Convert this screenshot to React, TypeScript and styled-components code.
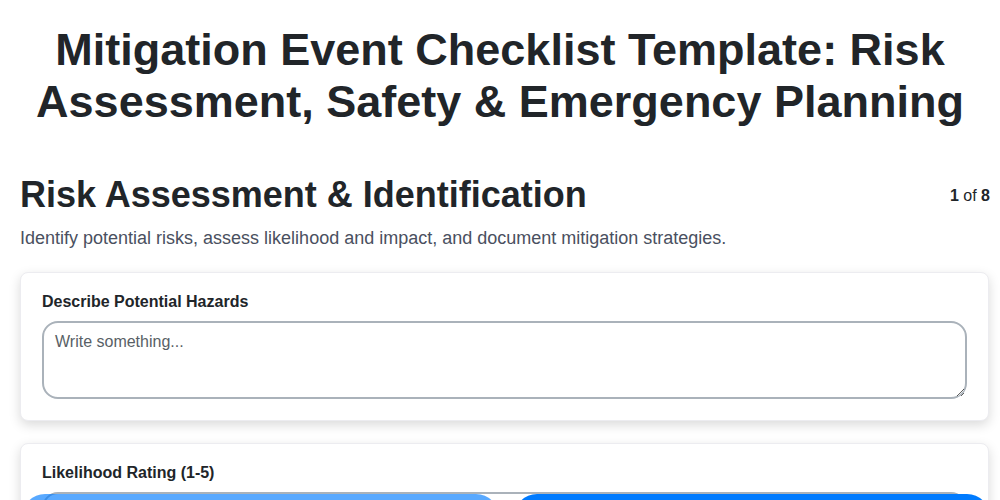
import styled, { createGlobalStyle } from 'styled-components';

const Global = createGlobalStyle`
    body {
        margin: 0;
        background: #ffffff;
        font-family: "Liberation Sans", Arial, sans-serif;
        color: #212529;
    }
`

export default function App(){
  return (
    <>
        <Global />
        <Title>Mitigation Event Checklist Template: Risk Assessment, Safety &amp; Emergency Planning</Title>
        <Step>
            <StepHeader>
                <StepTitle>Risk Assessment &amp; Identification</StepTitle>
                <Counter><b>1</b> of <b>8</b></Counter>
            </StepHeader>
            <StepText>Identify potential risks, assess likelihood and impact, and document mitigation strategies.</StepText>
            <Card>
                <Label htmlFor="hazards">Describe Potential Hazards</Label>
                <TextArea id="hazards" placeholder="Write something..." />
            </Card>
            <Card>
                <Label htmlFor="likelihood">Likelihood Rating (1-5)</Label>
                <Input id="likelihood" type="number" />
            </Card>
        </Step>
        <Nav>
            <NavButton disabled>Previous</NavButton>
            <NavButton>Next</NavButton>
        </Nav>
    </>
  )
}

const Title = styled.h1`
    margin: 24px 0 0;
    padding: 0 20px;
    font-size: 45px;
    line-height: 52px;
    font-weight: 700;
    text-align: center;
    color: #212529;
`

const Step = styled.section`
    display: flex;
    flex-direction: column;
    padding: 46px 10px 40px 20px;
`

const StepHeader = styled.div`
    display: flex;
    flex-direction: row;
    align-items: center;
    justify-content: space-between;
`

const StepTitle = styled.h2`
    margin: 0;
    font-size: 36px;
    line-height: 41px;
    font-weight: 700;
    color: #212529;
`

const Counter = styled.span`
    font-size: 16px;
    color: #212529;
    padding-top: 2px;
`

const StepText = styled.p`
    margin: 13px 0 23px;
    font-size: 18px;
    line-height: 21px;
    color: #4a5060;
`

const Card = styled.div`
    display: flex;
    flex-direction: column;
    gap: 10px;
    padding: 20px 21px 21px;
    margin: 0 1px 22px 0;
    background: #ffffff;
    border: 1px solid #ececf0;
    border-radius: 8px;
    box-shadow: 0 4px 12px rgba(0, 0, 0, 0.15);
`

const Label = styled.label`
    font-size: 16px;
    font-weight: 700;
    line-height: 18px;
    color: #212529;
`

const TextArea = styled.textarea`
    box-sizing: border-box;
    width: 100%;
    height: 78px;
    padding: 10px 11px;
    font-family: "Liberation Sans", Arial, sans-serif;
    font-size: 16px;
    color: #212529;
    border: 2px solid #aab2ba;
    border-radius: 16px;
    resize: vertical;
    &::placeholder { color: #595f66; }
`

const Input = styled.input`
    box-sizing: border-box;
    width: 100%;
    height: 44px;
    padding: 10px 11px;
    font-family: "Liberation Sans", Arial, sans-serif;
    font-size: 16px;
    border: 2px solid #aab2ba;
    border-radius: 16px;
`

const Nav = styled.nav`
    position: fixed;
    left: 0;
    right: 0;
    bottom: -40px;
    display: flex;
    flex-direction: row;
    gap: 15px;
    padding: 0 10px 0 22px;
`

const NavButton = styled.button`
    flex: 1;
    height: 46px;
    border: none;
    border-radius: 23px;
    background: #007bff;
    color: #ffffff;
    font-family: "Liberation Sans", Arial, sans-serif;
    font-size: 16px;
    font-weight: 700;
    &:disabled { opacity: 0.65; }
`
